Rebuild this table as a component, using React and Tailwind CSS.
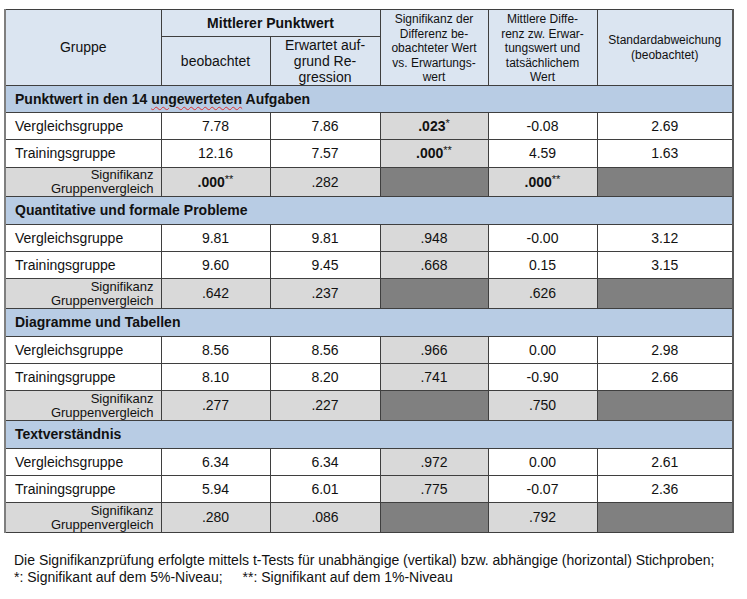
import React from "react";

const F = { fontFamily: '"Liberation Sans", Arial, sans-serif' };

function Ast({ s }) {
  return <span className="text-[11px] align-top relative top-[-1px]">{s}</span>;
}

const sections = [
  {
    title: "Punktwert in den 14 ",
    underline: "ungewerteten",
    rest: " Aufgaben",
    rows: [
      ["Vergleichsgruppe", "7.78", "7.86", <><b>.023</b><Ast s="*" /></>, "-0.08", "2.69"],
      ["Trainingsgruppe", "12.16", "7.57", <><b>.000</b><Ast s="**" /></>, "4.59", "1.63"],
    ],
    sig: [<><b>.000</b><Ast s="**" /></>, ".282", <><b>.000</b><Ast s="**" /></>],
    h: [27, 28, 29],
  },
  {
    title: "Quantitative und formale Probleme",
    rows: [
      ["Vergleichsgruppe", "9.81", "9.81", ".948", "-0.00", "3.12"],
      ["Trainingsgruppe", "9.60", "9.45", ".668", "0.15", "3.15"],
    ],
    sig: [".642", ".237", ".626"],
    h: [27, 27, 30],
  },
  {
    title: "Diagramme und Tabellen",
    rows: [
      ["Vergleichsgruppe", "8.56", "8.56", ".966", "0.00", "2.98"],
      ["Trainingsgruppe", "8.10", "8.20", ".741", "-0.90", "2.66"],
    ],
    sig: [".277", ".227", ".750"],
    h: [27, 27, 30],
  },
  {
    title: "Textverständnis",
    rows: [
      ["Vergleichsgruppe", "6.34", "6.34", ".972", "0.00", "2.61"],
      ["Trainingsgruppe", "5.94", "6.01", ".775", "-0.07", "2.36"],
    ],
    sig: [".280", ".086", ".792"],
    h: [27, 27, 30],
  },
];

const cell = "border border-[#3f3f3f] p-0 align-middle";

export default function App() {
  return (
    <div className="w-[747px] h-[599px] bg-white text-[#111]" style={F}>
      <table className="table-fixed border-collapse ml-[4px] mt-[9px] w-[728px] border-[#595959] border-t-black border-l-[#7f7f7f] border-l-2 border-r-2">
        <colgroup>
          <col className="w-[156px]" />
          <col className="w-[109px]" />
          <col className="w-[110px]" />
          <col className="w-[108px]" />
          <col className="w-[109px]" />
          <col className="w-[136px]" />
        </colgroup>
        <tbody>
          <tr className="h-[27px] bg-[#dbe5f1]">
            <td rowSpan={2} className={`${cell} text-center text-[14px]`}>Gruppe</td>
            <td colSpan={2} className={`${cell} text-center text-[14px] font-bold`}>Mittlerer Punktwert</td>
            <td rowSpan={2} className={`${cell} text-center text-[12px] leading-[14.5px] px-1 pt-[2px]`}>
              Signifikanz der<br />Differenz be-<br />obachteter Wert<br />vs. Erwartungs-<br />wert
            </td>
            <td rowSpan={2} className={`${cell} text-center text-[12px] leading-[14.5px] px-1 pt-[2px]`}>
              Mittlere Diffe-<br />renz zw. Erwar-<br />tungswert und<br />tatsächlichem<br />Wert
            </td>
            <td rowSpan={2} className={`${cell} text-center text-[12px] leading-[15px]`}>
              Standardabweichung<br />(beobachtet)
            </td>
          </tr>
          <tr className="h-[49px] bg-[#dbe5f1]">
            <td className={`${cell} text-center text-[14px]`}>beobachtet</td>
            <td className={`${cell} text-center text-[14px] leading-[16px]`}>
              Erwartet auf-<br />grund Re-<br />gression
            </td>
          </tr>
          {sections.map((s, i) => (
            <React.Fragment key={i}>
              <tr className="bg-[#b8cce4]" style={{ height: i === 0 ? 27 : 28 }}>
                <td colSpan={6} className={`${cell} pl-[9px] text-[14px] font-bold`}>
                  {s.title}
                  {s.underline && (
                    <span className="underline decoration-wavy decoration-[#e03030] decoration-1 underline-offset-2">
                      {s.underline}
                    </span>
                  )}
                  {s.rest}
                </td>
              </tr>
              {s.rows.map((r, j) => (
                <tr key={j} style={{ height: s.h[j] }}>
                  <td className={`${cell} pl-[9px] text-[14px] bg-white`}>{r[0]}</td>
                  <td className={`${cell} text-center text-[14px] bg-white`}>{r[1]}</td>
                  <td className={`${cell} text-center text-[14px] bg-white`}>{r[2]}</td>
                  <td className={`${cell} text-center text-[14px] bg-[#d9d9d9]`}>{r[3]}</td>
                  <td className={`${cell} text-center text-[14px] bg-white`}>{r[4]}</td>
                  <td className={`${cell} text-center text-[14px] bg-white`}>{r[5]}</td>
                </tr>
              ))}
              <tr className="bg-[#d9d9d9]" style={{ height: s.h[2] }}>
                <td className={`${cell} text-right pr-[7px] text-[13px] leading-[14px]`}>
                  Signifikanz<br />Gruppenvergleich
                </td>
                <td className={`${cell} text-center text-[14px]`}>{s.sig[0]}</td>
                <td className={`${cell} text-center text-[14px]`}>{s.sig[1]}</td>
                <td className={`${cell} bg-[#808080]`}></td>
                <td className={`${cell} text-center text-[14px]`}>{s.sig[2]}</td>
                <td className={`${cell} bg-[#808080]`}></td>
              </tr>
            </React.Fragment>
          ))}
        </tbody>
      </table>
      <div className="ml-[14px] mt-[19px] text-[14px] leading-[17px]">
        <div>Die Signifikanzprüfung erfolgte mittels t-Tests für unabhängige (vertikal) bzw. abhängige (horizontal) Stichproben;</div>
        <div>
          *: Signifikant auf dem 5%-Niveau;<span className="inline-block w-[20px]" />**: Signifikant auf dem 1%-Niveau
        </div>
      </div>
    </div>
  );
}
